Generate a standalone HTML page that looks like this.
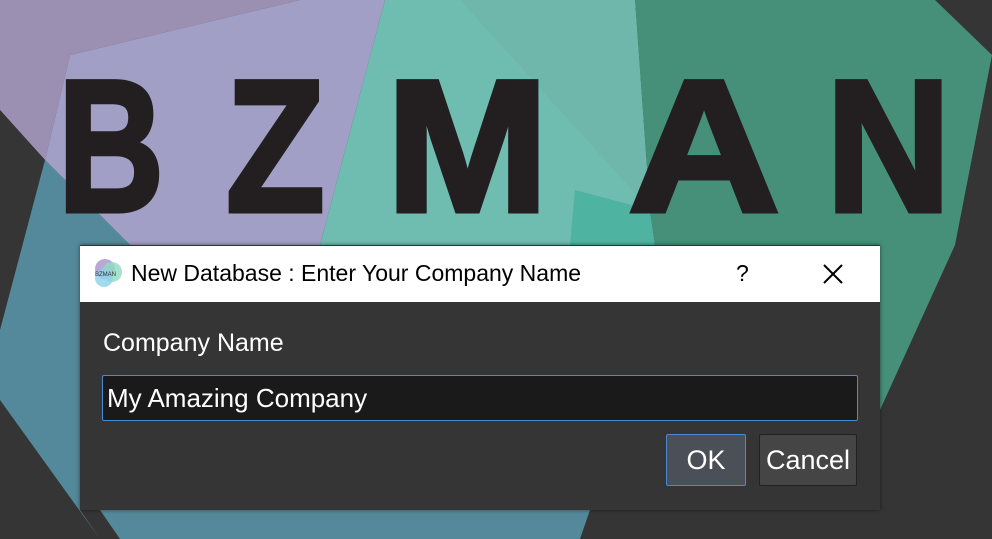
<!DOCTYPE html>
<html><head><style>
body{margin:0;width:992px;height:539px;overflow:hidden;background:#353535;position:relative;font-family:"Liberation Sans",sans-serif}
svg{position:absolute;left:0;top:0}
.L{position:absolute;top:52px;font:bold 188px "Liberation Sans",sans-serif;color:#231f20;line-height:1;transform-origin:0 0;-webkit-text-stroke:5px #231f20}
#dlg{position:absolute;left:80px;top:245px;width:800px;height:265px;background:#353535;box-shadow:0 0 4px rgba(0,0,0,.5)}
#tb{height:56px;background:#fff;border-top:1px solid #333;position:relative}
#tb .t{position:absolute;left:51px;top:14px;font-size:23px;color:#000}
#tb .q{position:absolute;left:656px;top:14px;font-size:23px}
.lab{position:absolute;left:23px;top:84px;color:#fff;font-size:25px}
.inp{position:absolute;left:22px;top:130px;height:46px;background:#1a1a1a;border:1px solid #4a8ad0;border-radius:2px;color:#fff;font-size:26px;line-height:44px;padding-left:4px;box-sizing:border-box;width:756px}
.btn{position:absolute;top:189px;height:52px;box-sizing:border-box;color:#fff;font-size:27px;text-align:center;line-height:50px;border-radius:2px}
</style></head><body>
<svg width="992" height="539">
<polygon points="0,0 300,0 70,55 45,160 0,110" fill="#9c90b2"/>
<polygon points="70,55 300,0 385,0 320,245 130,245 45,160" fill="#a19fc6"/>
<polygon points="0,110 45,160 0,330" fill="#353535"/>
<polygon points="45,160 130,245 80,245 80,510 100,539 0,400 0,330" fill="#53899a"/>
<polygon points="100,510 590,510 580,539 120,539" fill="#53899a"/>
<polygon points="385,0 460,0 520,0 635,0 650,210 575,245 320,245" fill="#6fbcb0"/>
<polygon points="460,0 635,0 650,210" fill="#70b7ab"/>
<polygon points="575,190 650,210 655,245 570,245" fill="#4fb3a1"/>
<polygon points="635,0 935,0 992,55 955,245 880,410 880,245 655,245 650,210" fill="#468f78"/>
</svg>
<div class="L" style="left:58px;transform:scaleX(0.78)">B</div>
<div class="L" style="left:226px;transform:scaleX(0.86)">Z</div>
<div class="L" style="left:386px;transform:scaleX(1.04)">M</div>
<div class="L" style="left:628px;transform:scaleX(1.12)">A</div>
<div class="L" style="left:826px;transform:scaleX(0.92)">N</div>
<div id="dlg">
<div id="tb">
<svg width="34" height="34" style="left:12px;top:11px"><circle cx="13" cy="12" r="10" fill="#b7a8d8"/><circle cx="20" cy="15" r="10" fill="#8fdcc0" opacity=".8"/><circle cx="12" cy="21" r="9" fill="#8fd0ec" opacity=".8"/><text x="3" y="19" font-size="6" fill="#333" font-family="Liberation Sans">BZMAN</text></svg>
<span class="t">New Database : Enter Your Company Name</span>
<span class="q">?</span>
<svg width="22" height="22" style="left:742px;top:17px"><path d="M2 2L20 20M20 2L2 20" stroke="#000" stroke-width="2"/></svg>
</div>
<div class="lab">Company Name</div>
<div class="inp">My Amazing Company</div>
<div class="btn" style="left:586px;width:80px;background:#4b4f57;border:1px solid #4a8ad0">OK</div>
<div class="btn" style="left:679px;width:98px;background:#454545;border:1px solid #222">Cancel</div>
</div>
</body></html>
